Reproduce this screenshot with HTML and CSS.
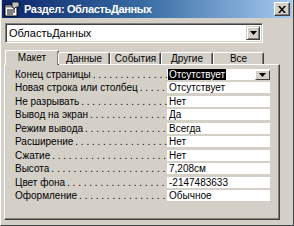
FILE: index.html
```html
<!DOCTYPE html>
<html lang="ru">
<head>
<meta charset="utf-8">
<title>Раздел: ОбластьДанных</title>
<link rel="stylesheet" href="styles.css">
</head>
<body>
<div class="window">
  <div class="titlebar">
    <svg class="app-icon" width="16" height="16" viewBox="0 0 16 16">
      <rect x="1" y="4" width="12" height="11" fill="#fff" stroke="#000" stroke-width="1"/>
      <rect x="1.5" y="4.5" width="11" height="2" fill="#808080"/>
      <line x1="3" y1="9" x2="11" y2="9" stroke="#000"/>
      <line x1="3" y1="11" x2="11" y2="11" stroke="#000"/>
      <line x1="3" y1="13" x2="9" y2="13" stroke="#000"/>
      <path d="M8 1 L15 1 L15 6 L12 6 L10 8 L9 6 L8 6 Z" fill="#c0c0c0" stroke="#000" stroke-width="0.8"/>
    </svg>
    <span class="title">Раздел: ОбластьДанных</span>
    <button class="close" aria-label="Закрыть">
      <svg width="8" height="7" viewBox="0 0 8 7"><path d="M0 0h2l2 2.5L6 0h2L5 3.5 8 7H6L4 4.5 2 7H0l3-3.5z" fill="#000"/></svg>
    </button>
  </div>

  <div class="combo">
    <span class="combo-text">ОбластьДанных</span>
    <span class="combo-btn"><svg width="7" height="4" viewBox="0 0 7 4"><path d="M0 0h7L3.5 4z" fill="#000"/></svg></span>
  </div>

  <div class="tabs">
    <div class="tab active">Макет</div>
    <div class="tab">Данные</div>
    <div class="tab">События</div>
    <div class="tab">Другие</div>
    <div class="tab">Все</div>
  </div>

  <div class="panel">
    <div class="grid">
      <div class="label">Конец страницы</div>
      <div class="value select"><span class="sel">Отсутствует</span><span class="mini-btn"><svg width="7" height="4" viewBox="0 0 7 4"><path d="M0 0h7L3.5 4z" fill="#000"/></svg></span></div>
      <div class="label">Новая строка или столбец</div>
      <div class="value">Отсутствует</div>
      <div class="label">Не разрывать</div>
      <div class="value">Нет</div>
      <div class="label">Вывод на экран</div>
      <div class="value">Да</div>
      <div class="label">Режим вывода</div>
      <div class="value">Всегда</div>
      <div class="label">Расширение</div>
      <div class="value">Нет</div>
      <div class="label">Сжатие</div>
      <div class="value">Нет</div>
      <div class="label">Высота</div>
      <div class="value">7,208см</div>
      <div class="label">Цвет фона</div>
      <div class="value">-2147483633</div>
      <div class="label">Оформление</div>
      <div class="value">Обычное</div>
    </div>
  </div>
</div>
</body>
</html>
```
FILE: styles.css
```css
html, body {
  margin: 0;
  padding: 0;
  background: #d4d0c8;
}

.window {
  width: 294px;
  height: 226px;
  box-sizing: border-box;
  background: #d4d0c8;
  border-left: 1px solid #ffffff;
  border-right: 1px solid #404040;
  border-bottom: 1px solid #404040;
  padding: 0 1px 2px 1px;
  display: flex;
  flex-direction: column;
  font-family: "Liberation Sans", Arial, sans-serif;
  color: #000;
  overflow: hidden;
}

.titlebar {
  height: 18px;
  flex: none;
  display: flex;
  align-items: center;
  padding: 0 2px 0 2px;
  background: linear-gradient(to right, #0a246a 0%, #3a6ea5 50%, #a6caf0 100%);
}

.app-icon {
  flex: none;
  display: block;
}

.title {
  margin-left: 4px;
  color: #fff;
  font-weight: bold;
  font-size: 11px;
  letter-spacing: -0.35px;
  white-space: nowrap;
}

.close {
  margin-left: auto;
  width: 16px;
  height: 14px;
  padding: 0;
  box-sizing: border-box;
  background: #d4d0c8;
  border: 1px solid;
  border-color: #fff #404040 #404040 #fff;
  box-shadow: inset -1px -1px 0 #808080;
  display: flex;
  align-items: center;
  justify-content: center;
}

.combo {
  margin: 5px 0 0 3px;
  width: 258px;
  height: 20px;
  flex: none;
  box-sizing: border-box;
  background: #fff;
  border: 1px solid;
  border-color: #808080 #fff #fff #808080;
  box-shadow: inset 1px 1px 0 #404040, inset -1px -1px 0 #d4d0c8;
  display: flex;
  align-items: center;
  padding: 2px 2px 2px 3px;
}

.combo-text {
  font-size: 11px;
  flex: 1;
}

.combo-btn {
  width: 14px;
  height: 14px;
  box-sizing: border-box;
  background: #d4d0c8;
  border: 1px solid;
  border-color: #d4d0c8 #404040 #404040 #d4d0c8;
  box-shadow: inset 1px 1px 0 #fff, inset -1px -1px 0 #808080;
  display: flex;
  align-items: center;
  justify-content: center;
}

.tabs {
  display: flex;
  align-items: flex-end;
  height: 14px;
  margin: 7px 0 0 3px;
  flex: none;
  position: relative;
  z-index: 1;
}

.tab {
  width: 52px;
  height: 12px;
  box-sizing: border-box;
  font-size: 10px;
  line-height: 11px;
  text-align: center;
  border-top: 1px solid #fff;
  border-left: 1px solid #fff;
  border-right: 1px solid #404040;
  box-shadow: inset -1px 0 0 #808080;
  border-radius: 2px 2px 0 0;
}

.tab.active {
  width: 54px;
  height: 15px;
  margin: 0 -1px -1px 0;
  padding-top: 1px;
  background: #d4d0c8;
}

.tab:nth-child(3), .tab:nth-child(5) {
  width: 51px;
}

.panel {
  margin-left: 2px;
  width: 276px;
  height: 156px;
  flex: none;
  box-sizing: border-box;
  border: 1px solid;
  border-color: #fff #404040 #404040 #fff;
  box-shadow: inset -1px -1px 0 #808080;
  padding: 4px 0 0 10px;
}

.grid {
  display: grid;
  grid-template-columns: 152px 103px;
  grid-auto-rows: 11px;
  row-gap: 2.44px;
}

.label {
  font-size: 10px;
  line-height: 11px;
  white-space: nowrap;
  overflow: hidden;
  display: flex;
}

.label::after {
  content: " . . . . . . . . . . . . . . . . . . . . . . . . . . . . . . . . . . . . . . . . . . . . . . . . . . .";
  letter-spacing: 0;
  padding-left: 2px;
}

.value {
  background: #fff;
  font-size: 10px;
  line-height: 11px;
  padding-left: 2px;
  white-space: nowrap;
}

.value.select {
  display: flex;
  align-items: center;
  padding-left: 1px;
}

.sel {
  background: #000;
  color: #fff;
  padding: 0 1px;
}

.mini-btn {
  margin-left: auto;
  width: 15px;
  height: 10px;
  box-sizing: border-box;
  background: #d4d0c8;
  border: 1px solid;
  border-color: #fff #404040 #404040 #fff;
  display: flex;
  align-items: center;
  justify-content: center;
}
```
